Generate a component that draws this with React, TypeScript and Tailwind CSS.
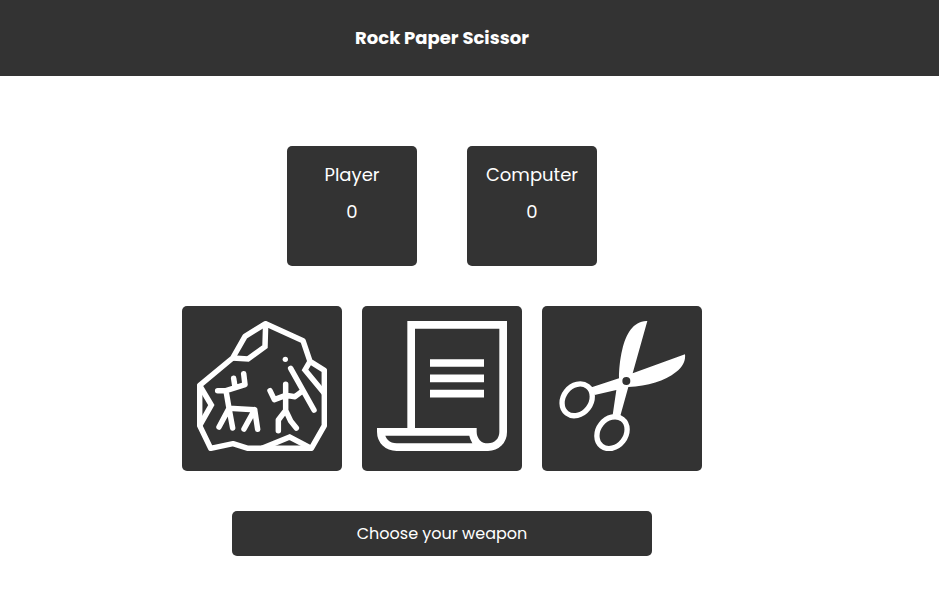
import React from 'react';

function ScoreCard({ label, score }: { label: string; score: number }) {
  return (
    <div className="flex h-[120px] w-[130px] flex-col items-center gap-[10px] rounded-[5px] bg-[#333] pt-[15px] text-[18px] leading-[27px] text-white">
      <p>{label}</p>
      <p>{score}</p>
    </div>
  );
}

function WeaponButton({ name, children }: { name: string; children: React.ReactNode }) {
  return (
    <button aria-label={name} className="flex h-[165px] w-[160px] justify-center rounded-[5px] bg-[#333] pt-[15px]">
      <svg viewBox="45 45 390 390" className="block h-[130px] w-[130px] text-white">
        {children}
      </svg>
    </button>
  );
}

function Rock() {
  return (
    <g fill="none" stroke="currentColor" strokeWidth="16.500">
      <path strokeLinejoin="round" d="M251 53 L363 104 L384 166 L427 193 V359 L388 427 H198 L153 413 L86 427 L53 359 V238 L152 156 L189 91 Z" />
      <path strokeLinejoin="miter" d="M251 53 L249 122 L198 159 L152 156 M53 238 L88 297 L53 359 M384 166 L369 192 L428 263 M240 427 L323 393 L388 427" />
      <g strokeLinecap="round" strokeLinejoin="round">
        <path d="M107 254 H132 L189 236 L185 203 M155 217 L159 243 M132 254 L141 307 L218 311 L227 370 M141 307 L111 363 M141 307 L152 366 M218 311 L186 369" />
        <path d="M311 235 V313 L289 342 V374 M311 313 L326 345 L343 366 M264 254 L277 281 L311 268 L339 272 L360 256 M326 187 L396 312" />
      </g>
      <circle cx="310" cy="160" r="8" fill="currentColor" stroke="none" />
    </g>
  );
}

function Paper() {
  return (
    <g fill="none" stroke="currentColor" strokeWidth="23">
      <path d="M147.500 378 V56.500 H423.500 V378 C423.500 404 404 423.500 378 423.500 C351 423.500 332.500 404 332.500 377.500 H56.500 C56.500 404 76 423.500 104 423.500 H378" />
      <path d="M204 171 H366 M204 217 H366 M204 263 H366" />
    </g>
  );
}

function Scissors() {
  return (
    <g>
      <path fill="currentColor" fillRule="evenodd" d="M316 45 C275 44 252 83 241 130 C233 163 231 195 231 217 L149 244 L158 267 L223 252 L212 327 L235 329 L259 243 C317 240 369 225 402 198 C424 181 431 162 429 145 L272 202 Z M253 213 A12 12 0 1 0 253 237 A12 12 0 1 0 253 213" />
      <g fill="none" stroke="currentColor" strokeWidth="16">
        <ellipse cx="105.500" cy="281.500" rx="41.500" ry="51" transform="rotate(38 105.500 281.500)" />
        <ellipse cx="210" cy="380" rx="41.500" ry="51" transform="rotate(38 210 380)" />
      </g>
    </g>
  );
}

export default function App() {
  return (
    <div className="min-h-screen bg-white font-['Poppins','Inter',sans-serif]">
      <header className="h-[76px] bg-[#333] pt-6">
        <h1 className="w-[884px] text-center text-[18px] leading-[27px] font-bold text-white">Rock Paper Scissor</h1>
      </header>
      <main className="flex w-[884px] flex-col items-center gap-10 pt-[70px]">
        <section className="flex gap-[50px]">
          <ScoreCard label="Player" score={0} />
          <ScoreCard label="Computer" score={0} />
        </section>
        <section className="flex gap-5">
          <WeaponButton name="Rock"><Rock /></WeaponButton>
          <WeaponButton name="Paper"><Paper /></WeaponButton>
          <WeaponButton name="Scissors"><Scissors /></WeaponButton>
        </section>
        <p className="flex h-[45px] w-[420px] items-center justify-center rounded-[5px] bg-[#333] text-[16px] leading-6 text-white">Choose your weapon</p>
      </main>
    </div>
  );
}
